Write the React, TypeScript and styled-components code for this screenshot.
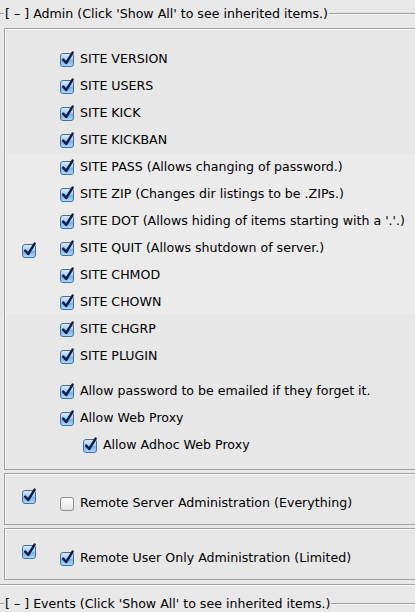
import React, { useId } from 'react';
import styled, { createGlobalStyle } from 'styled-components';

const GlobalStyle = createGlobalStyle`
  html, body {
    margin: 0;
    padding: 0;
    background: #e8e8e8;
    overflow: hidden;
  }
  body {
    font-family: 'DejaVu Sans', Verdana, sans-serif;
    font-size: 12.6px;
    color: #000;
  }
`;

const Page = styled.div`
  width: 415px;
  height: 612px;
  overflow: hidden;
`;

const Legend = styled.div`
  display: flex;
  align-items: center;
  height: 28px;
`;

const LegendLine = styled.div<{ $grow?: boolean }>`
  flex: ${(p) => (p.$grow ? '1 1 auto' : '0 0 4px')};
  height: 0;
  border-top: 1px solid #9e9e9e;
  border-bottom: 1px solid #f8f8f8;
`;

const LegendText = styled.span`
  padding: 0 1px;
  white-space: nowrap;
  line-height: 16px;
`;

const Panel = styled.div<{ $rows: number }>`
  margin-left: 4px;
  margin-right: -4px;
  padding: 1px 0 0 1px;
  border: 1px solid #a2a2a2;
  border-right: none;
  background: #fbfbfb;
  display: grid;
  grid-template-columns: 54px 1fr;
  grid-template-rows: repeat(${(p) => p.$rows}, auto);

  & + & {
    margin-top: 3px;
  }
`;

const Band = styled.div<{ $row: number; $shade?: boolean; $pad?: string }>`
  grid-column: 1 / -1;
  grid-row: ${(p) => p.$row};
  background: ${(p) => (p.$shade ? '#ebebeb' : '#e7e7e7')};
  padding: ${(p) => p.$pad || '0'};
  padding-left: 54px;
`;

const Side = styled.div<{ $center?: boolean; $top?: number }>`
  grid-column: 1;
  grid-row: 1 / -1;
  align-self: ${(p) => (p.$center ? 'center' : 'start')};
  margin-top: ${(p) => p.$top || 0}px;
  padding-left: 16px;
  z-index: 1;
  display: flex;
`;

const Row = styled.div<{ $indent?: number; $h?: number }>`
  display: flex;
  align-items: center;
  height: ${(p) => p.$h || 27}px;
  padding-left: ${(p) => p.$indent || 0}px;
  white-space: nowrap;
`;

const Gap = styled.div`
  height: 8px;
`;

const Label = styled.span`
  margin-left: 5px;
  line-height: 16px;
`;

const Divider = styled.div`
  margin-top: 4px;
  border-top: 1px solid #a2a2a2;
  border-bottom: 1px solid #f8f8f8;
`;

const BottomLegend = styled(Legend)`
  margin-top: 4px;
`;

const Box = styled.svg`
  flex: 0 0 auto;
  display: block;
`;

const Check = ({ on = true }: { on?: boolean }) => {
  const id = useId().replace(/:/g, '');
  return (
    <Box width="15" height="16" viewBox="0 0 15 16">
      <defs>
        <linearGradient id={`g${id}`} x1="0" y1="0" x2="0" y2="1">
          {on ? (
            <>
              <stop offset="0" stopColor="#dceefd" />
              <stop offset="0.45" stopColor="#9fcdf6" />
              <stop offset="0.55" stopColor="#72b2ee" />
              <stop offset="1" stopColor="#b3ddfb" />
            </>
          ) : (
            <>
              <stop offset="0" stopColor="#ffffff" />
              <stop offset="0.5" stopColor="#f2f2f2" />
              <stop offset="1" stopColor="#e2e2e2" />
            </>
          )}
        </linearGradient>
      </defs>
      <rect
        x="0.5"
        y="2.5"
        width="13"
        height="13"
        rx="2.5"
        fill={`url(#g${id})`}
        stroke={on ? '#4c6d96' : '#8c8c8c'}
      />
      {on && (
        <path
          d="M3.2 8.6 L6.2 12 L12.6 1.6"
          fill="none"
          stroke="#131c44"
          strokeWidth="2.4"
          strokeLinecap="round"
          strokeLinejoin="round"
        />
      )}
    </Box>
  );
};

const Item = ({ text, indent, on = true }: { text: string; indent?: number; on?: boolean }) => (
  <Row $indent={indent}>
    <Check on={on} />
    <Label>{text}</Label>
  </Row>
);

const App = () => {
  return (
    <Page>
      <GlobalStyle />
      <Legend>
        <LegendLine />
        <LegendText>[ – ] Admin (Click 'Show All' to see inherited items.)</LegendText>
        <LegendLine $grow />
      </Legend>

      <Panel $rows={3}>
        <Band $row={1} $pad="15px 0 0 0">
          <Item text="SITE VERSION" />
          <Item text="SITE USERS" />
          <Item text="SITE KICK" />
          <Item text="SITE KICKBAN" />
        </Band>
        <Band $row={2} $shade>
          <Item text="SITE PASS (Allows changing of password.)" />
          <Item text="SITE ZIP (Changes dir listings to be .ZIPs.)" />
          <Item text="SITE DOT (Allows hiding of items starting with a '.'.)" />
          <Item text="SITE QUIT (Allows shutdown of server.)" />
          <Item text="SITE CHMOD" />
          <Item text="SITE CHOWN" />
        </Band>
        <Band $row={3} $pad="0 0 11px 0">
          <Item text="SITE CHGRP" />
          <Item text="SITE PLUGIN" />
          <Gap />
          <Item text="Allow password to be emailed if they forget it." />
          <Item text="Allow Web Proxy" />
          <Item text="Allow Adhoc Web Proxy" indent={23} />
        </Band>
        <Side $center>
          <Check />
        </Side>
      </Panel>

      <Panel $rows={1}>
        <Band $row={1} $pad="20px 0 13px 1px">
          <Row $h={16}>
            <Check on={false} />
            <Label>Remote Server Administration (Everything)</Label>
          </Row>
        </Band>
        <Side $top={13}>
          <Check />
        </Side>
      </Panel>

      <Panel $rows={1}>
        <Band $row={1} $pad="20px 0 13px 2px">
          <Row $h={16}>
            <Check />
            <Label>Remote User Only Administration (Limited)</Label>
          </Row>
        </Band>
        <Side $top={13}>
          <Check />
        </Side>
      </Panel>

      <Divider />
      <BottomLegend>
        <LegendLine />
        <LegendText>[ – ] Events (Click 'Show All' to see inherited items.)</LegendText>
        <LegendLine $grow />
      </BottomLegend>
    </Page>
  );
};

export default App;
